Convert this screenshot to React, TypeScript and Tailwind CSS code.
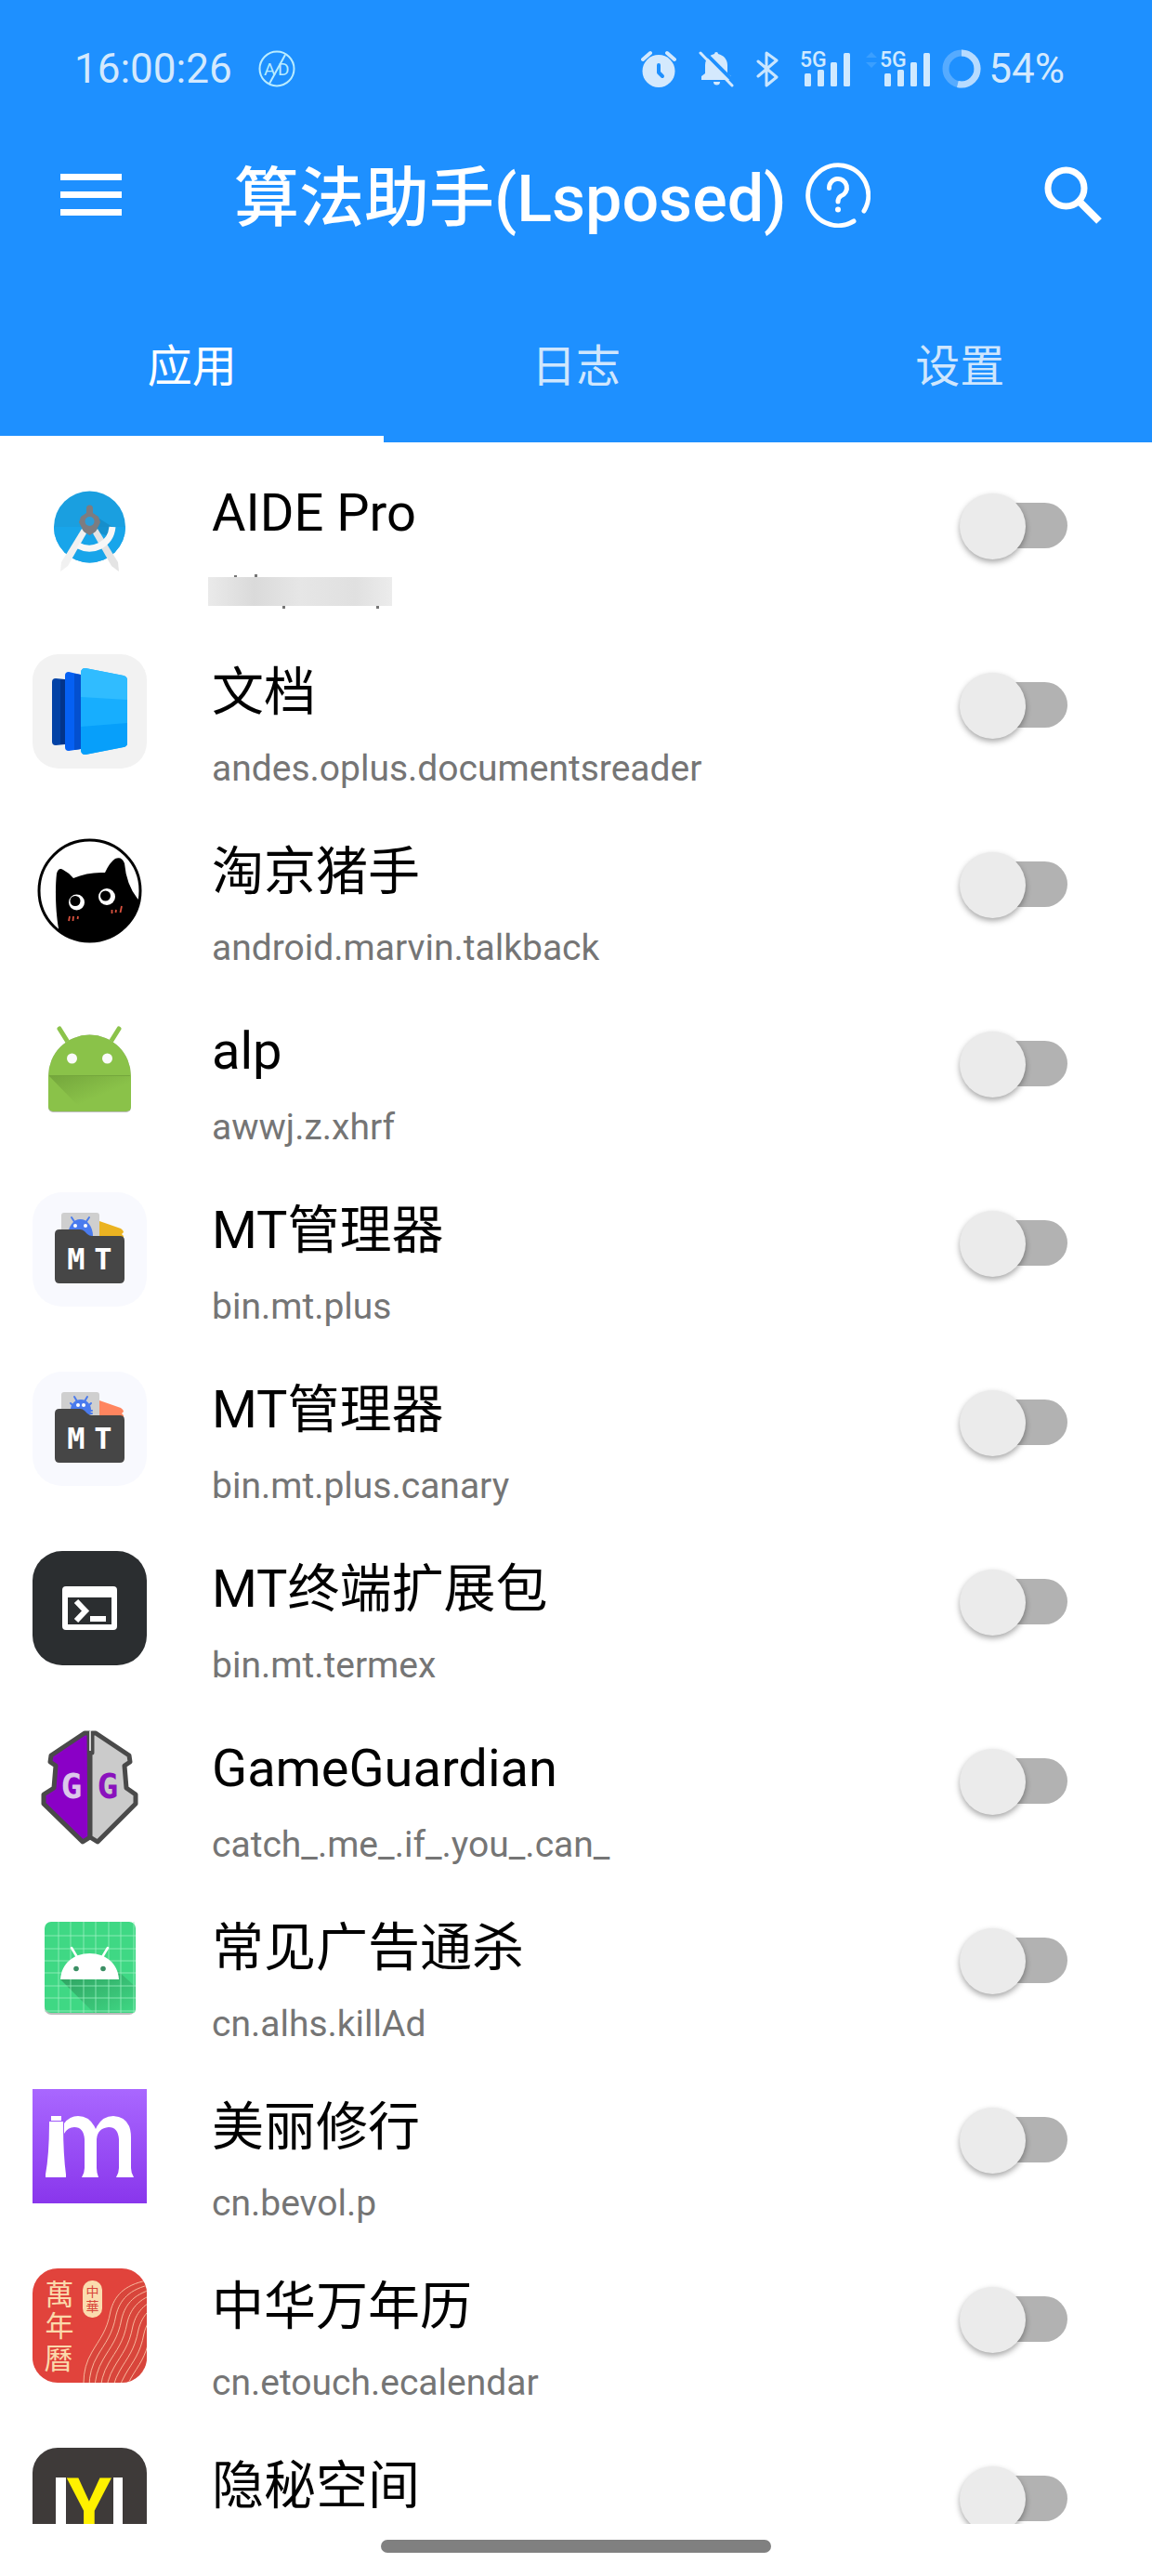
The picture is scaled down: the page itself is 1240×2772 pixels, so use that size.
import { useState } from "react";
import type { ReactNode } from "react";

type AppEntry = {
  name: string;
  pkg: string;
  icon: ReactNode;
};

/* ---------- Status bar icons ---------- */

function NoAdsIcon() {
  return (
    <svg className="h-10 w-10" viewBox="0 0 40 40" fill="none" stroke="#b9ecff" strokeWidth="2">
      <circle cx="20" cy="20" r="18.500" />
      <path d="M29 5L12 36" />
      <text x="6" y="27" fontSize="19" fontFamily="Roboto" fill="#b9ecff" stroke="none">A</text>
      <text x="21" y="27" fontSize="19" fontFamily="Roboto" fill="#b9ecff" stroke="none">D</text>
    </svg>
  );
}

function AlarmIcon() {
  return (
    <svg className="h-10 w-[38px]" viewBox="0 0 38 40">
      <circle cx="19" cy="22.500" r="17.500" fill="#d4e9fd" />
      <path d="M2 10L10 3M36 10L28 3" stroke="#d4e9fd" strokeWidth="4" strokeLinecap="round" />
      <path d="M19 16V24L23 28" stroke="#1e90ff" strokeWidth="4" strokeLinecap="round" strokeLinejoin="round" fill="none" />
    </svg>
  );
}

function BellOffIcon() {
  return (
    <svg className="h-10 w-[38px]" viewBox="0 0 38 40">
      <path d="M19 2a2 2 0 0 1 2 2c6 1.500 10 6 10 12v9l4 3v4H3v-4l4-3v-9c0-6 4-10.500 10-12a2 2 0 0 1 2-2z" fill="#d4e9fd" />
      <path d="M16 34h7a3.500 3.500 0 0 1-7 0z" fill="#d4e9fd" />
      <path d="M4 0L41 37" stroke="#1e90ff" strokeWidth="4" />
      <path d="M2 3L36 38" stroke="#d4e9fd" strokeWidth="3" strokeLinecap="round" />
    </svg>
  );
}

function BluetoothIcon() {
  return (
    <svg className="h-10 w-6" viewBox="0 0 24 40" fill="none" stroke="#c9e6ff" strokeWidth="3" strokeLinejoin="round" strokeLinecap="round">
      <path d="M2 12L22 29L11 38V3L22 11L2 28" />
    </svg>
  );
}

function SignalIcon() {
  return (
    <svg className="h-10 w-[54px] overflow-visible" viewBox="0 0 54 40" fill="#cfe9ff">
      <text x="-1" y="18" fontSize="23" fontFamily="Roboto" fontWeight="500">5G</text>
      <rect x="4" y="25" width="7" height="14" rx="1.500" />
      <rect x="18" y="21" width="7" height="18" rx="1.500" />
      <rect x="32" y="13" width="7" height="26" rx="1.500" />
      <rect x="46" y="3" width="7" height="36" rx="1.500" />
    </svg>
  );
}

function DataArrowsIcon() {
  return (
    <svg className="h-10 w-3" viewBox="0 0 12 40" fill="#3a9fff">
      <path d="M0 8L6 2L12 8zM0 13L6 19L12 13z" />
    </svg>
  );
}

function BatteryRing() {
  return (
    <svg className="h-[42px] w-[42px]" viewBox="0 0 42 42" fill="none" strokeWidth="7">
      <circle cx="21" cy="21" r="17" stroke="#56abff" />
      <circle cx="21" cy="21" r="17" stroke="#b7dbff" pathLength="100" strokeDasharray="54 46" transform="rotate(-90 21 21)" />
    </svg>
  );
}

/* ---------- App icons, drawn on a 123 x 123 grid ---------- */

function IconBox({ children }: { children: ReactNode }) {
  return (
    <svg className="h-[123px] w-[123px] shrink-0" viewBox="0 0 123 123" aria-hidden="true">
      {children}
    </svg>
  );
}

function AideIcon() {
  return (
    <IconBox>
      <circle cx="61.500" cy="56" r="38.500" fill="#1a9fe0" />
      <path d="M23 56a38.500 38.500 0 0 0 77 0z" fill="#18a5ea" />
      <path d="M64 42L86 56L82 66L70 62z" fill="#1583bd" opacity="0.6" />
      <path d="M53 58L58 63L38 98L30 104L31 94z" fill="#f1f1f1" />
      <path d="M70 58L65 63L85 98L93 104L92 94z" fill="#e4e4e4" />
      <path d="M49 76C64 84 84 76 86 56" fill="none" stroke="#f7f7f7" strokeWidth="7" />
      <path d="M58 36a3.500 3.500 0 0 1 7 0v5l6 4l2 6l-5 10l-6.500 4l-6.500-4l-5-10l2-6l6-4z" fill="#7c7c80" />
      <circle cx="61.500" cy="50" r="5" fill="#2d9dd8" />
    </IconBox>
  );
}

function DocsIcon() {
  return (
    <IconBox>
      <rect width="123" height="123" rx="28" fill="#f2f2f2" />
      <path d="M25 26L35 27V97L25 98Q21 98 21 94V30Q21 26 25 26z" fill="#0242a6" />
      <path d="M30 27L35 27V97L30 97z" fill="#02348a" />
      <path d="M39 19L52 22V102L39 104Q35 104 35 100V23Q35 19 39 19z" fill="#0560f3" />
      <path d="M45 21L52 22V102L45 103z" fill="#0450cf" />
      <path d="M57 15L98 23Q102 24 102 28V96Q102 99 98 100L57 108Q52 108 52 103V20Q52 15 57 15z" fill="#17aefe" />
      <path d="M57 15L98 23Q102 24 102 28V49L52 46V20Q52 15 57 15z" fill="#30bcff" />
      <path d="M52 78L102 74V96Q102 99 98 100L57 108Q52 108 52 103z" fill="#079ffa" />
    </IconBox>
  );
}

function CatIcon() {
  return (
    <IconBox>
      <clipPath id="cat-clip">
        <circle cx="61.500" cy="61.500" r="55" />
      </clipPath>
      <g clipPath="url(#cat-clip)">
        <path d="M28 102C25 85 24 60 26 43Q28 36 33 39Q39 42 44 48Q60 41 78 42Q83 31 89 27Q96 24 99 32Q101 55 113 70L123 80V123H28z" />
      </g>
      <circle cx="61.500" cy="61.500" r="54.500" fill="none" stroke="#000" strokeWidth="3" />
      <circle cx="47.500" cy="74" r="8.500" fill="#fff" />
      <circle cx="46" cy="72.500" r="5.500" />
      <circle cx="80" cy="68" r="9" fill="#fff" />
      <circle cx="78.500" cy="67" r="5.500" />
      <path d="M40 89L39 94M44 89L43.500 94M49 89L48.500 92M85.500 82V86M90 82L89.500 85M96 78L94.500 85" stroke="#d9523f" strokeWidth="1.800" />
    </IconBox>
  );
}

function AndroidIcon() {
  return (
    <IconBox>
      <path d="M29 17L39 33M93 17L83 33" stroke="#8bc34a" strokeWidth="5" strokeLinecap="round" />
      <path d="M17 102V68a44.500 44.500 0 0 1 89 0V102a5 5 0 0 1-5 5H22a5 5 0 0 1-5-5z" fill="#bdbdbd" />
      <path d="M17 101V68a44.500 44.500 0 0 1 89 0V101a5 5 0 0 1-5 5H22a5 5 0 0 1-5-5z" fill="#8ac249" />
      <linearGradient id="droid-shade" x1="0" y1="0" x2="1" y2="1">
        <stop offset="0" stopColor="#74a63c" />
        <stop offset="0.600" stopColor="#8ac249" />
      </linearGradient>
      <path d="M18 68H105V105H54z" fill="url(#droid-shade)" />
      <path d="M18 67.500H105" stroke="#74a63c" strokeWidth="1" />
      <circle cx="42.500" cy="49" r="5.500" fill="#fafafa" />
      <circle cx="80.500" cy="49" r="5.500" fill="#fafafa" />
    </IconBox>
  );
}

function MtIcon({ canary = false }: { canary?: boolean }) {
  return (
    <IconBox>
      <rect width="123" height="123" rx="32" fill="#f8f9fe" />
      <rect x="31" y="22" width="41" height="40" rx="3" fill="#cfcfcf" />
      <path d="M72 31L95 39Q98 41 98 43L96 45L98 47V56H72z" fill={canary ? "#ff855f" : "#ebb321"} />
      {canary ? (
        <g stroke="#4a7bee" strokeWidth="2" strokeLinecap="round">
          <path d="M45 27L48 32M59 27L56 32M41 34L46 39M63 34L58 39M40 42H64M41 45H64" />
          <ellipse cx="52" cy="41" rx="10" ry="10" fill="#4a7bee" />
        </g>
      ) : (
        <g stroke="#4a7bee" strokeWidth="2" strokeLinecap="round">
          <path d="M42 27L46 33M61 27L57 33" />
          <path d="M39 47a12.500 17 0 0 1 25 0z" fill="#4a7bee" />
        </g>
      )}
      <circle cx={canary ? 49 : 46} cy="36" r="2" fill="#fff" />
      <circle cx={canary ? 55 : 57} cy="36" r="2" fill="#fff" />
      <path d="M29 40H51Q54 40 56 42L59 45Q61 47 64 47H94Q99 47 99 52V93Q99 98 94 98H29Q24 98 24 93V45Q24 40 29 40z" fill="#464646" />
      <g fill="#fff" fontFamily="DejaVu Sans Mono" fontWeight="700" fontSize="32" textAnchor="middle">
        <text x="47" y="83">M</text>
        <text x="76" y="83">T</text>
      </g>
    </IconBox>
  );
}

function TerminalIcon() {
  return (
    <IconBox>
      <rect width="123" height="123" rx="32" fill="#2b2e30" />
      <path d="M36 38H87Q91 38 91 42V81Q91 85 87 85H36Q32 85 32 81V42Q32 38 36 38zM38 50V79H85V50z" fill="#fff" fillRule="evenodd" />
      <path d="M47 54L57 64.500L47 75" fill="none" stroke="#fff" strokeWidth="6" />
      <rect x="62" y="70" width="17" height="6" fill="#fff" />
    </IconBox>
  );
}

function GuardianIcon() {
  return (
    <IconBox>
      <g stroke="#4a4a4a" strokeWidth="5" strokeLinejoin="round">
        <path d="M61 3H56L20 27L19 34L25 38L23 62L12 69V79L54 120L62 115z" fill="#8a00c6" />
        <path d="M64 3H68L104 27L105 34L99 38L101 62L111 69V79L70 120L62 115V24H64z" fill="#cbcbcb" />
      </g>
      <path d="M62 1V22" stroke="#fff" strokeWidth="1.500" />
      <g fontFamily="DejaVu Sans Mono" fontWeight="700" fontSize="38" textAnchor="middle">
        <text x="42" y="73" fill="#dcc8ea">G</text>
        <text x="81" y="73" fill="#8a12bd">G</text>
      </g>
    </IconBox>
  );
}

function KillAdIcon() {
  return (
    <IconBox>
      <rect x="13" y="15" width="98" height="98" rx="7" fill="#bcbcbc" />
      <rect x="13" y="13" width="98" height="98" rx="7" fill="#3fd884" />
      <linearGradient id="kill-shade" x1="0" y1="0" x2="1" y2="1">
        <stop offset="0" stopColor="#2f9f60" />
        <stop offset="1" stopColor="#3fd884" />
      </linearGradient>
      <path d="M30 75L66 111H108Q111 111 111 105V83L92 66z" fill="url(#kill-shade)" />
      <path
        d="M28 13V111M41 13V111M55 13V111M68 13V111M82 13V111M95 13V111M109 13V111M13 28H111M13 42H111M13 55H111M13 68H111M13 82H111M13 95H111M13 109H111"
        stroke="#9df0c1"
        strokeWidth="0.800"
      />
      <path d="M42 41L48 51M81 41L75 51" stroke="#fff" strokeWidth="2.500" strokeLinecap="round" />
      <path d="M30 75C31 58 44 47 61.500 47S92 58 93 75z" fill="#fff" />
      <circle cx="47" cy="63.500" r="2.800" fill="#3b8f64" />
      <circle cx="76" cy="63.500" r="2.800" fill="#3b8f64" />
    </IconBox>
  );
}

function BevolIcon() {
  return (
    <IconBox>
      <linearGradient id="bevol" x1="0" y1="0" x2="0" y2="1">
        <stop offset="0" stopColor="#a967ff" />
        <stop offset="1" stopColor="#8936ec" />
      </linearGradient>
      <rect width="123" height="123" fill="url(#bevol)" />
      <g fill="#fff">
        <rect x="20" y="29" width="11" height="5" />
        <path d="M18 35H33Q33 70 36 92V95H14V92Q18 70 18 35z" />
        <path d="M34 37Q40 29 49 29Q62 29 68 43Q74 29 87 29Q106 30 106 52V85Q106 90 109 95H90Q93 90 93 85V54Q92 41 82 41Q70 42 69 54V85Q69 90 71 95H53Q56 90 56 85V54Q55 41 45 41Q38 41 34 48z" />
      </g>
    </IconBox>
  );
}

function CalendarIcon() {
  return (
    <IconBox>
      <clipPath id="cal-clip">
        <rect width="123" height="123" rx="27" />
      </clipPath>
      <g clipPath="url(#cal-clip)">
        <rect width="123" height="123" fill="#e1433c" />
        <path d="M123 13C98 18 88 30 84 46C80 68 72 76 64 90Q55 105 55 123H123z" fill="#d2483a" opacity="0.6" />
        <g fill="none" stroke="#f7b79c" strokeWidth="1">
          {[0, 1, 2, 3, 4, 5, 6, 7, 8, 9, 10, 11, 12, 13].map((i) => (
            <path key={i} d="M123 13C98 18 88 30 84 46C80 68 72 76 64 90Q55 105 55 123V180" transform={`translate(${i * 6} ${i * 4})`} />
          ))}
        </g>
      </g>
      <g fill="#fbd9ab" fontFamily="Noto Sans CJK TC" fontSize="31" textAnchor="middle">
        <text x="29" y="39">萬</text>
        <text x="29" y="73">年</text>
        <text x="28" y="108">曆</text>
      </g>
      <rect x="54" y="13" width="21" height="40" rx="10" fill="#fbdcae" />
      <g fill="#d8453a" fontFamily="Noto Sans CJK TC" fontSize="14" textAnchor="middle">
        <text x="64.500" y="30">中</text>
        <text x="64.500" y="46">華</text>
      </g>
    </IconBox>
  );
}

function HiddenSpaceIcon() {
  return (
    <IconBox>
      <rect width="123" height="123" rx="27" fill="#3e3a39" />
      <rect x="25" y="32" width="11" height="56" fill="#fff" />
      <rect x="87" y="32" width="10" height="56" fill="#fff" />
      <text x="61" y="88" fill="#fff100" fontFamily="Roboto" fontWeight="700" fontSize="78" textAnchor="middle">Y</text>
    </IconBox>
  );
}

/* Mosaic over the package name of the first entry */
function MaskedText() {
  return (
    <svg className="-ml-1 h-[46px] w-[198px]" viewBox="0 0 198 46" role="img" aria-label="已隐藏">
      <linearGradient id="mask" x1="0" x2="1">
        <stop offset="0" stopColor="#eaeaea" />
        <stop offset="0.250" stopColor="#dadada" />
        <stop offset="0.500" stopColor="#e6e6e6" />
        <stop offset="0.800" stopColor="#e0e0e0" />
        <stop offset="1" stopColor="#ececec" />
      </linearGradient>
      <rect y="10" width="198" height="31" fill="url(#mask)" />
      <path d="M28 8h3v2h-3zM50 7h3v3h-3zM80 41h3v3h-3zM181 41h3v3h-3z" fill="#757575" />
    </svg>
  );
}

const apps: AppEntry[] = [
  { name: "AIDE Pro", pkg: "", icon: <AideIcon /> },
  { name: "文档", pkg: "andes.oplus.documentsreader", icon: <DocsIcon /> },
  { name: "淘京猪手", pkg: "android.marvin.talkback", icon: <CatIcon /> },
  { name: "alp", pkg: "awwj.z.xhrf", icon: <AndroidIcon /> },
  { name: "MT管理器", pkg: "bin.mt.plus", icon: <MtIcon /> },
  { name: "MT管理器", pkg: "bin.mt.plus.canary", icon: <MtIcon canary /> },
  { name: "MT终端扩展包", pkg: "bin.mt.termex", icon: <TerminalIcon /> },
  { name: "GameGuardian", pkg: "catch_.me_.if_.you_.can_", icon: <GuardianIcon /> },
  { name: "常见广告通杀", pkg: "cn.alhs.killAd", icon: <KillAdIcon /> },
  { name: "美丽修行", pkg: "cn.bevol.p", icon: <BevolIcon /> },
  { name: "中华万年历", pkg: "cn.etouch.ecalendar", icon: <CalendarIcon /> },
  { name: "隐秘空间", pkg: "", icon: <HiddenSpaceIcon /> },
];

const tabs = ["应用", "日志", "设置"];

function StatusBar() {
  return (
    <div className="flex h-28 items-center pt-9 pr-[94px] pl-20 text-[44px] leading-none text-[#d4e9fd]">
      <span>16:00:26</span>
      <div className="ml-7">
        <NoAdsIcon />
      </div>
      <div className="ml-auto flex items-center gap-6">
        <AlarmIcon />
        <BellOffIcon />
        <BluetoothIcon />
        <SignalIcon />
      </div>
      <div className="ml-4 flex items-center gap-1">
        <DataArrowsIcon />
        <SignalIcon />
      </div>
      <div className="ml-3 flex items-center gap-2">
        <BatteryRing />
        <span>54%</span>
      </div>
    </div>
  );
}

function Toolbar() {
  return (
    <div className="flex h-[196px] items-center pr-[54px] pl-[65px]">
      <button aria-label="菜单">
        <svg className="h-[46px] w-[66px]" viewBox="0 0 66 46" fill="#fff">
          <path d="M0 0H66V7H0zM0 19H66V26H0zM0 38H66V45H0z" />
        </svg>
      </button>
      <h1 className="ml-[121px] pt-2 text-[70px] leading-[82px] font-medium whitespace-nowrap text-white">算法助手(Lsposed)</h1>
      <button className="ml-5" aria-label="帮助">
        <svg className="h-[70px] w-[70px]" viewBox="0 0 70 70" fill="none" stroke="#fff" strokeLinecap="round">
          <path d="M63 52A32.500 32.500 0 1 0 52 63" strokeWidth="5" />
          <path d="M25.500 27.500A9.500 9.500 0 1 1 38 36Q35 38 35 42" strokeWidth="5" />
          <circle cx="35" cy="50.500" r="3" fill="#fff" stroke="none" />
        </svg>
      </button>
      <button className="ml-auto" aria-label="搜索">
        <svg className="h-[62px] w-[62px]" viewBox="0 0 62 62" fill="none" stroke="#fff">
          <circle cx="23.500" cy="23.500" r="19.500" strokeWidth="7" />
          <path d="M38 38L59 59" strokeWidth="8" />
        </svg>
      </button>
    </div>
  );
}

export default function App() {
  const [activeTab, setActiveTab] = useState("应用");
  const [enabled, setEnabled] = useState<Record<number, boolean>>({});

  const toggle = (index: number) => {
    setEnabled({ ...enabled, [index]: !enabled[index] });
  };

  return (
    <div
      lang="zh-CN"
      className="flex h-screen flex-col bg-white font-['Roboto','Noto_Sans_CJK_SC',sans-serif]"
    >
      <header className="shrink-0 bg-[#1e90ff]">
        <StatusBar />
        <Toolbar />
        <nav className="grid h-[168px] grid-cols-3">
          {tabs.map((tab) => (
            <button
              key={tab}
              onClick={() => setActiveTab(tab)}
              className={`border-b-[7px] pt-3 text-[48px] leading-[56px] ${
                activeTab === tab ? "border-white text-white" : "border-transparent text-[#cfe6fd]"
              }`}
            >
              {tab}
            </button>
          ))}
        </nav>
      </header>

      {/* App list */}
      <main className="min-h-0 flex-1 overflow-y-auto [scrollbar-width:none]">
        <ul>
          {apps.map((app, index) => (
            <li key={index} className="flex items-start pt-[35px] pr-[91px] pb-3 pl-[35px]">
              {app.icon}
              <div className="mt-2 ml-[70px] min-w-0 flex-1">
                <label htmlFor={`app-${index}`} className="block text-[56px] leading-[66px] text-black">
                  {app.name}
                </label>
                <div className="mt-[26px] h-[46px] text-[39px] leading-[46px] text-[#757575]">
                  {index === 0 ? <MaskedText /> : app.pkg}
                </div>
              </div>
              <input
                id={`app-${index}`}
                type="checkbox"
                role="switch"
                checked={!!enabled[index]}
                onChange={() => toggle(index)}
                className="relative mt-5 h-[71px] w-[116px] shrink-0 cursor-pointer appearance-none before:absolute before:top-[10px] before:right-0 before:h-[49px] before:w-[102px] before:rounded-full before:bg-[#b2b2b2] before:content-[''] after:absolute after:top-0 after:left-0 after:h-[71px] after:w-[71px] after:rounded-full after:bg-[#ebebeb] after:shadow-[0_3px_6px_rgba(0,0,0,0.35)] after:content-[''] checked:before:bg-[#8fc7ff] checked:after:left-[45px] checked:after:bg-[#1e90ff]"
              />
            </li>
          ))}
        </ul>
      </main>

      <footer className="flex h-14 shrink-0 justify-center pt-[17px]">
        <div className="h-[14px] w-[420px] rounded-full bg-[#808080]" />
      </footer>
    </div>
  );
}
